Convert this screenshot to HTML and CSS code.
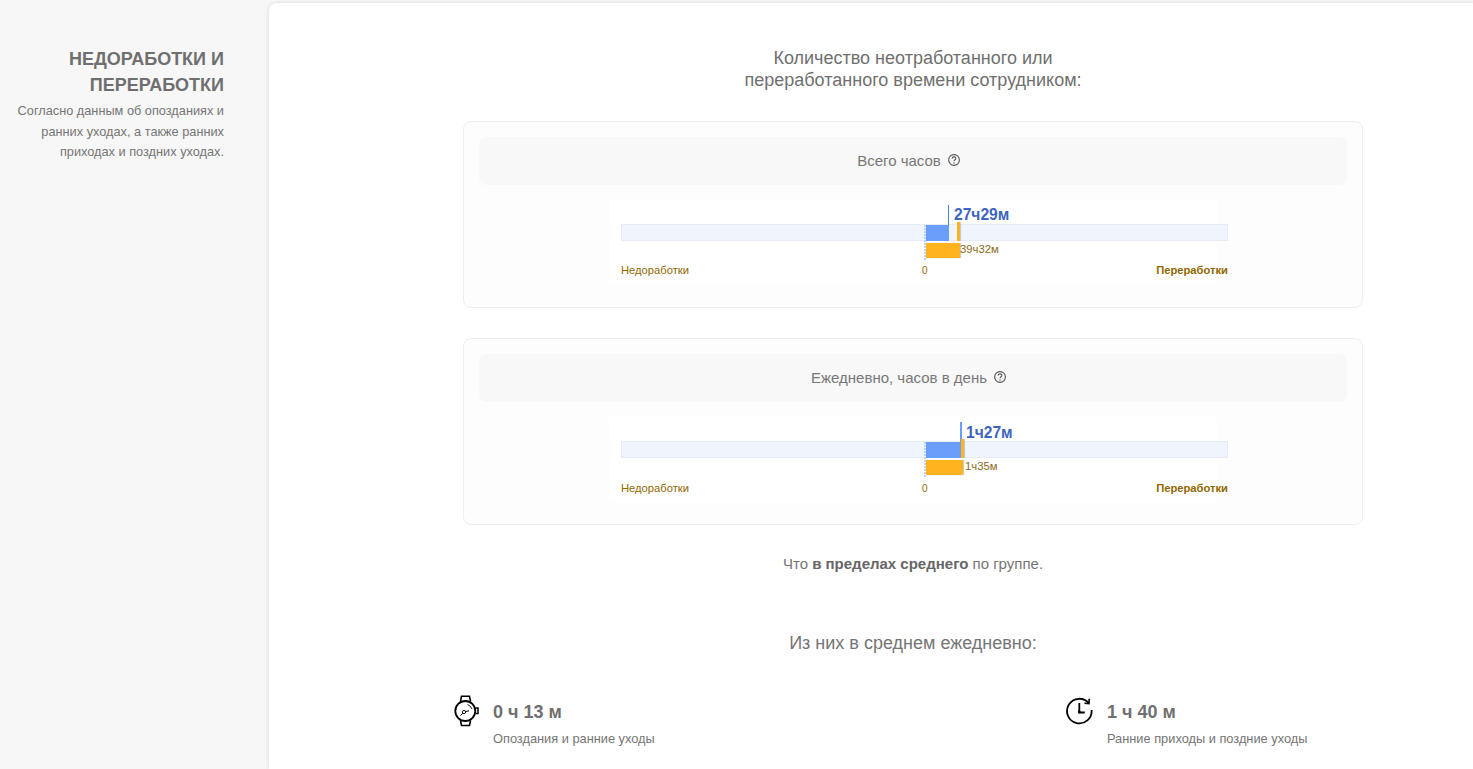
FILE: index.html
```html
<!DOCTYPE html>
<html lang="ru">
<head>
<meta charset="utf-8">
<title>Недоработки и переработки</title>
<link rel="stylesheet" href="styles.css">
</head>
<body>
<div class="page">
  <aside class="side">
    <h2 class="side-title">НЕДОРАБОТКИ И ПЕРЕРАБОТКИ</h2>
    <p class="side-text">Согласно данным об опозданиях и ранних уходах, а также ранних приходах и поздних уходах.</p>
  </aside>
  <main class="main">
    <div class="content">
      <h3 class="title">Количество неотработанного или<br>переработанного времени сотрудником:</h3>

      <section class="card">
        <div class="card-head">Всего часов
          <svg class="help" viewBox="0 0 14 14"><circle cx="7" cy="7" r="5.4" fill="none" stroke="#555" stroke-width="1.1"/><path d="M5.2 5.6c0-2.3 3.6-2.3 3.6-.1 0 1.3-1.8 1.3-1.8 2.7" fill="none" stroke="#555" stroke-width="1.1"/><circle cx="7" cy="10" r=".7" fill="#555"/></svg>
        </div>
        <div class="chart">
          <div class="track"></div>
          <div class="zero-line"></div>
          <div class="blue" style="width:23px"></div>
          <div class="blue-mark" style="left:339px"></div>
          <div class="orange" style="width:34px"></div>
          <div class="orange-mark" style="left:348px"></div>
          <div class="val-main" style="left:345px">27ч29м</div>
          <div class="val-sub" style="left:351px">39ч32м</div>
          <div class="lbl lbl-left">Недоработки</div>
          <div class="lbl lbl-zero">0</div>
          <div class="lbl lbl-right">Переработки</div>
        </div>
      </section>

      <section class="card card-low">
        <div class="card-head">Ежедневно, часов в день
          <svg class="help" viewBox="0 0 14 14"><circle cx="7" cy="7" r="5.4" fill="none" stroke="#555" stroke-width="1.1"/><path d="M5.2 5.6c0-2.3 3.6-2.3 3.6-.1 0 1.3-1.8 1.3-1.8 2.7" fill="none" stroke="#555" stroke-width="1.1"/><circle cx="7" cy="10" r=".7" fill="#555"/></svg>
        </div>
        <div class="chart">
          <div class="track"></div>
          <div class="zero-line"></div>
          <div class="blue" style="width:36px"></div>
          <div class="blue-mark blue-mark-wide" style="left:351px"></div>
          <div class="orange" style="width:37px"></div>
          <div class="orange-mark" style="left:352px"></div>
          <div class="val-main" style="left:357px">1ч27м</div>
          <div class="val-sub" style="left:356px">1ч35м</div>
          <div class="lbl lbl-left">Недоработки</div>
          <div class="lbl lbl-zero">0</div>
          <div class="lbl lbl-right">Переработки</div>
        </div>
      </section>

      <p class="note">Что <b>в пределах среднего</b> по группе.</p>
      <h3 class="subtitle">Из них в среднем ежедневно:</h3>

      <div class="stats">
        <div class="stat stat-a">
          <svg class="stat-icon" viewBox="0 0 26 32" width="26" height="32" fill="none" stroke="#000" stroke-width="1.800">
            <circle cx="12.300" cy="16" r="10"/>
            <path d="M7.500 6.500 8.500 1.200h8l1 5.300M7.500 25.500 8.500 30.500h8l1-5" stroke-width="1.600"/>
            <path d="M22.500 13h2.500v5.500h-2.500" stroke-width="1.500"/>
            <circle cx="11" cy="17" r="1.600" stroke-width=".9"/>
            <path d="M10 18.200 7.500 20.500M12.500 16.500l3.500-.6" stroke-width="1"/>
            <path d="M14.500 9.500a7.500 7.500 0 0 1 4.500 4.500" stroke-width=".9"/>
          </svg>
          <div class="stat-body">
            <div class="stat-val">0 ч 13 м</div>
            <div class="stat-cap">Опоздания и ранние уходы</div>
          </div>
        </div>
        <div class="stat">
          <svg class="stat-icon" viewBox="0 0 28 30" width="28" height="30" fill="none" stroke="#000" stroke-width="1.800">
            <path d="M25.600 15A12.300 12.300 0 1 1 22.800 8.200"/>
            <path d="M23.200 3.800 23 8.600 18.400 8.200" stroke-width="1.600"/>
            <path d="M13.300 8v9.500h5.500" stroke-width="1.800"/>
            <circle cx="13.300" cy="17" r="1.400" fill="#000" stroke="none"/>
          </svg>
          <div class="stat-body">
            <div class="stat-val">1 ч 40 м</div>
            <div class="stat-cap">Ранние приходы и поздние уходы</div>
          </div>
        </div>
      </div>
    </div>
  </main>
</div>
</body>
</html>
```

FILE: styles.css
```css
* { box-sizing: border-box; }
html, body { margin: 0; height: 100%; overflow: hidden; }
body {
  background: #f7f7f7;
  color: #6f6f6f;
  font-family: "Liberation Sans", Arial, sans-serif;
}
.page { display: flex; height: 769px; padding-top: 3px; }
.side {
  width: 269px;
  flex: none;
  padding: 43px 45px 0 0;
  text-align: right;
}
.side-title {
  margin: 0;
  font-size: 18px;
  line-height: 26px;
  font-weight: 700;
  color: #6f6f6f;
}
.side-text {
  margin: 3px 0 0;
  font-size: 12.750px;
  line-height: 20.500px;
  color: #757575;
}
.main {
  flex: 1;
  background: #fff;
  border-top-left-radius: 8px;
  box-shadow: 0 0 5px rgba(0, 0, 0, .12);
  padding: 44px 0 0 194px;
}
.content { width: 900px; }
.title {
  margin: 0 0 30px;
  font-size: 18px;
  line-height: 22px;
  font-weight: 400;
  text-align: center;
  color: #6f6f6f;
}
.card {
  height: 187px;
  margin-bottom: 30px;
  padding: 15px;
  background: #fdfdfd;
  border: 1px solid #eeeeee;
  border-radius: 8px;
}
.card-head {
  display: flex;
  align-items: center;
  justify-content: center;
  gap: 6px;
  height: 48px;
  padding: 0 8px 1px 0;
  background: #f8f8f8;
  border-radius: 8px;
  font-size: 15px;
  color: #777;
}
.help { width: 14px; height: 14px; margin-top: -1px; }
.chart {
  position: relative;
  width: 608px;
  height: 85px;
  margin: 15px auto 0;
  background: #fff;
}
.track {
  position: absolute;
  left: 12px;
  top: 24px;
  width: 607px;
  height: 17px;
  background: #eff4fd;
  border: 1px solid #e6ebf5;
}
.zero-line {
  position: absolute;
  left: 315px;
  top: 25px;
  width: 2px;
  height: 35px;
  background: repeating-linear-gradient(to bottom, #bdd2f1 0, #bdd2f1 2px, transparent 2px, transparent 3px);
}
.blue {
  position: absolute;
  left: 317px;
  top: 25px;
  height: 16px;
  background: #6b9dfb;
}
.blue-mark {
  position: absolute;
  top: 5px;
  width: 1px;
  height: 20px;
  background: #4a7fe0;
}
.blue-mark-wide { width: 2px; background: #6b9dfb; }
.orange {
  position: absolute;
  left: 317px;
  top: 43px;
  height: 15px;
  background: #ffb41f;
  box-shadow: 1px 0 1px rgba(0, 0, 0, .2);
}
.orange-mark {
  position: absolute;
  top: 22px;
  width: 3px;
  height: 19px;
  background: #ffb41f;
  box-shadow: 1px 0 1px rgba(0, 0, 0, .2);
}
.val-main {
  position: absolute;
  top: 6px;
  font-size: 15.600px;
  line-height: 18px;
  font-weight: 700;
  color: #3d65bf;
}
.card-low .val-main { top: 7px; }
.val-sub {
  position: absolute;
  top: 43px;
  font-size: 11.300px;
  line-height: 13px;
  color: #8a6a20;
}
.lbl {
  position: absolute;
  top: 64px;
  font-size: 11.200px;
  line-height: 13px;
  color: #8f6800;
}
.card-low .lbl { top: 65px; }
.lbl-left { left: 12px; }
.lbl-zero { left: 313px; font-size: 10px; }
.lbl-right { right: -11px; font-weight: 700; }
.note {
  margin: 0;
  font-size: 15px;
  line-height: 18px;
  text-align: center;
  color: #757575;
}
.note b { font-weight: 700; color: #666; }
.subtitle {
  margin: 59px 0 0;
  font-size: 18px;
  line-height: 22px;
  font-weight: 400;
  text-align: center;
  color: #757575;
}
.stats {
  display: flex;
  margin: 42px 0 0 -10px;
}
.stat {
  display: flex;
  align-items: flex-start;
  gap: 13px;
}
.stat-a { width: 613px; gap: 14px; }
.stat-icon { flex: none; margin-top: -1px; }
.stat-val {
  margin-top: 5px;
  font-size: 18px;
  line-height: 22px;
  font-weight: 700;
  color: #6f6f6f;
}
.stat-cap {
  margin-top: 8px;
  font-size: 12.800px;
  line-height: 16px;
  color: #757575;
}
```
